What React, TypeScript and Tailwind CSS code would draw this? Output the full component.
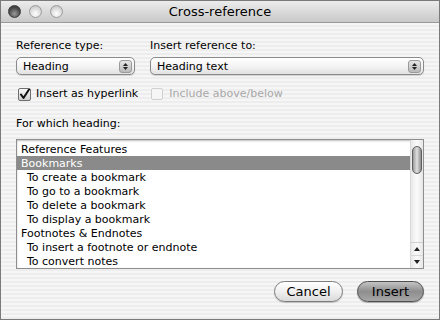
import React from "react";

const rows: { text: string; level: number; selected?: boolean }[] = [
  { text: "Reference Features", level: 0 },
  { text: "Bookmarks", level: 0, selected: true },
  { text: "To create a bookmark", level: 1 },
  { text: "To go to a bookmark", level: 1 },
  { text: "To delete a bookmark", level: 1 },
  { text: "To display a bookmark", level: 1 },
  { text: "Footnotes & Endnotes", level: 0 },
  { text: "To insert a footnote or endnote", level: 1 },
  { text: "To convert notes", level: 1 },
];

function Light({ dark }: { dark?: boolean }) {
  return (
    <div
      className={`w-[13px] h-[13px] rounded-full border ${
        dark
          ? "border-[#3a3a3a] bg-[radial-gradient(circle_at_50%_70%,#9a9a9a_0%,#4a4a4a_60%,#2e2e2e_100%)]"
          : "border-[#9c9c9c] bg-[radial-gradient(circle_at_50%_70%,#ffffff_0%,#dcdcdc_55%,#b8b8b8_100%)]"
      }`}
    />
  );
}

function Stepper() {
  return (
    <div className="w-[13px] h-[13px] mr-[2px] rounded-[3px] bg-gradient-to-b from-[#e6e6e6] to-[#b9b9b9] border border-[#9a9a9a] flex flex-col items-center justify-center gap-[1px]">
      <svg width="5" height="3" viewBox="0 0 5 3">
        <polygon points="2.5,0 5,3 0,3" fill="#222" />
      </svg>
      <svg width="5" height="3" viewBox="0 0 5 3">
        <polygon points="0,0 5,0 2.5,3" fill="#222" />
      </svg>
    </div>
  );
}

function Popup({ label, className }: { label: string; className?: string }) {
  return (
    <div
      className={`h-[18px] rounded-[5px] border border-[#8a8a8a] bg-gradient-to-b from-[#ffffff] via-[#f4f4f4] to-[#e2e2e2] shadow-[0_1px_1px_rgba(0,0,0,0.15)] flex items-center justify-between pl-[6px] ${className ?? ""}`}
    >
      <span className="text-[11px] leading-none text-black">{label}</span>
      <Stepper />
    </div>
  );
}

export default function App() {
  return (
    <div
      className="w-[440px] h-[320px] flex flex-col border border-[#7a7a7a] overflow-hidden"
      style={{ fontFamily: '"DejaVu Sans", "Liberation Sans", sans-serif' }}
    >
      {/* Title bar */}
      <div className="h-[22px] shrink-0 relative flex items-center bg-gradient-to-b from-[#ececec] to-[#c9c9c9] border-b border-[#9a9a9a]">
        <div className="flex items-center gap-[8px] pl-[7px]">
          <Light dark />
          <Light />
          <Light />
        </div>
        <div className="absolute inset-0 flex items-center justify-center text-[13px] text-black">
          Cross-reference
        </div>
      </div>

      {/* Body */}
      <div className="flex-1 flex flex-col px-[15px] pt-[16px] bg-[repeating-linear-gradient(180deg,#f6f6f6_0px,#f6f6f6_2px,#ededed_2px,#ededed_4px)]">
        <div className="flex gap-[15px]">
          <div className="w-[119px] flex flex-col">
            <span className="text-[11px] leading-[13px] text-black">Reference type:</span>
            <Popup label="Heading" className="mt-[5px]" />
          </div>
          <div className="flex-1 flex flex-col">
            <span className="text-[11px] leading-[13px] text-black">Insert reference to:</span>
            <Popup label="Heading text" className="mt-[5px]" />
          </div>
        </div>

        <div className="flex items-center mt-[12px] h-[14px]">
          <div className="w-[13px] h-[13px] ml-[2px] rounded-[2px] border border-[#6e6e6e] bg-gradient-to-b from-[#f8f8f8] to-[#d0d0d0] flex items-center justify-center">
            <svg width="11" height="11" viewBox="0 0 11 11">
              <path d="M2 5.5 L4.5 9 L10 0.5" fill="none" stroke="#111" strokeWidth="2" strokeLinecap="round" strokeLinejoin="round" />
            </svg>
          </div>
          <span className="ml-[5px] text-[11px] text-black">Insert as hyperlink</span>
          <div className="w-[12px] h-[12px] ml-[13px] rounded-[2px] border border-[#cfcfcf] bg-[#f6f6f6]" />
          <span className="ml-[6px] text-[11px] text-[#a8a8a8]">Include above/below</span>
        </div>

        <span className="mt-[16px] text-[11px] leading-[13px] text-black">For which heading:</span>

        {/* List box */}
        <div className="mt-[9px] h-[130px] flex border border-[#8f8f8f] bg-white shadow-[inset_0_1px_2px_rgba(0,0,0,0.25)]">
          <div className="flex-1 flex flex-col pt-[2px]">
            {rows.map((r) => (
              <div
                key={r.text}
                className={`h-[14px] flex items-center text-[11px] leading-none whitespace-nowrap ${
                  r.selected ? "bg-[#8a8a8a] text-white" : "text-black"
                } ${r.level ? "pl-[10px]" : "pl-[4px]"}`}
              >
                {r.text}
              </div>
            ))}
          </div>
          {/* Scrollbar */}
          <div className="w-[13px] flex flex-col border-l border-[#d8d8d8] bg-gradient-to-r from-[#e9e9e9] via-[#fbfbfb] to-[#e6e6e6]">
            <div className="flex-1 pt-[6px] px-[1px]">
              <div className="h-[28px] rounded-full border border-[#5e5e5e] bg-gradient-to-r from-[#9c9c9c] via-[#e0e0e0] to-[#8c8c8c]" />
            </div>
            <div className="h-[26px] flex flex-col border-t border-[#cfcfcf]">
              <div className="flex-1 flex items-center justify-center border-b border-[#d8d8d8]">
                <svg width="6" height="4" viewBox="0 0 6 4">
                  <polygon points="3,0 6,4 0,4" fill="#222" />
                </svg>
              </div>
              <div className="flex-1 flex items-center justify-center">
                <svg width="6" height="4" viewBox="0 0 6 4">
                  <polygon points="0,0 6,0 3,4" fill="#222" />
                </svg>
              </div>
            </div>
          </div>
        </div>

        {/* Buttons */}
        <div className="flex justify-end gap-[14px] mt-[12px]">
          <div className="w-[69px] h-[21px] rounded-full border border-[#7c7c7c] bg-gradient-to-b from-[#ffffff] via-[#f0f0f0] to-[#dadada] shadow-[0_1px_1px_rgba(0,0,0,0.2)] flex items-center justify-center text-[13px] text-black">
            Cancel
          </div>
          <div className="w-[67px] h-[21px] rounded-full border border-[#4e4e4e] bg-gradient-to-b from-[#c4c4c4] via-[#8e8e8e] to-[#a6a6a6] shadow-[0_1px_1px_rgba(0,0,0,0.3)] flex items-center justify-center text-[13px] text-black">
            Insert
          </div>
        </div>
      </div>
    </div>
  );
}
